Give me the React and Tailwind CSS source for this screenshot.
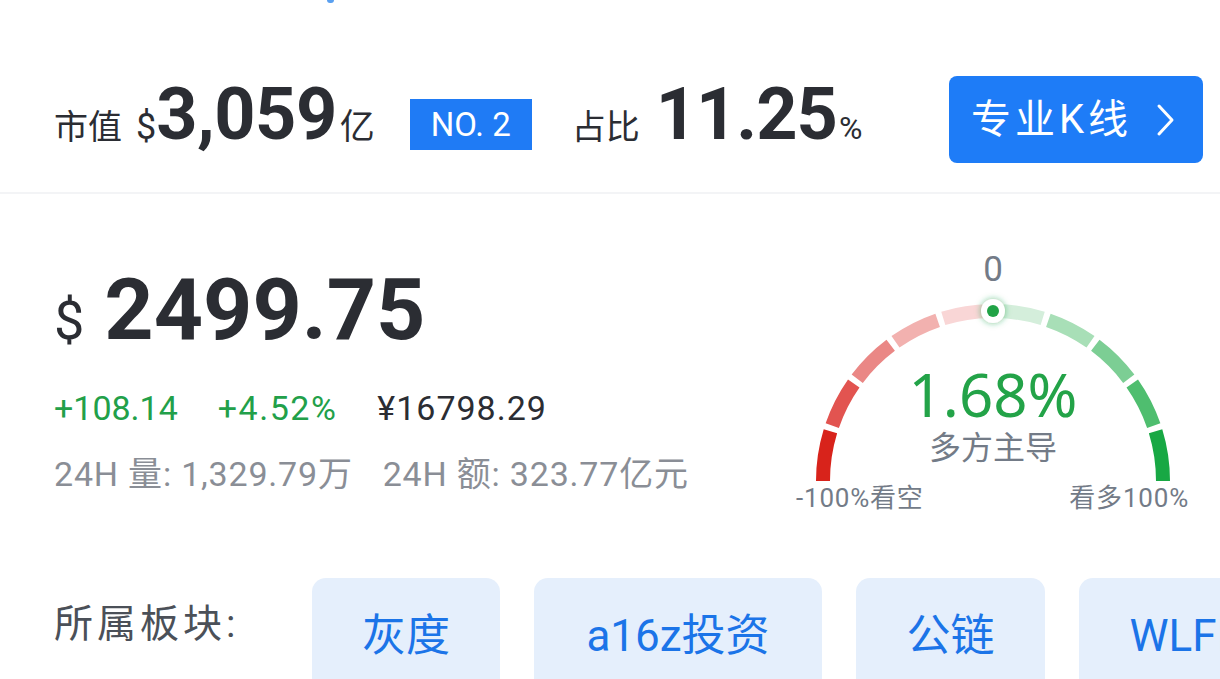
const segs = [
    "#d8231b",
    "#e25450",
    "#ea8785",
    "#f2b1af",
    "#f9d6d6",
    "#d4eedb",
    "#a8dfb7",
    "#7cce94",
    "#4fbe6f",
    "#18a844",
];

function arcPath(cx, cy, r, a0, a1) {
    const rad = (a) => (a * Math.PI) / 180;
    const x0 = cx + r * Math.cos(rad(a0));
    const y0 = cy - r * Math.sin(rad(a0));
    const x1 = cx + r * Math.cos(rad(a1));
    const y1 = cy - r * Math.sin(rad(a1));
    return `M ${x0} ${y0} A ${r} ${r} 0 0 1 ${x1} ${y1}`;
}

function Gauge() {
    const cx = 210;
    const cy = 235;
    const r = 170;
    return (
        <div className="relative w-[420px] h-[270px] shrink-0">
            <svg width="420" height="270" className="absolute left-0 top-0">
                <defs>
                    <filter id="glow" x="-80%" y="-80%" width="260%" height="260%">
                        <feDropShadow dx="0" dy="0" stdDeviation="3" floodColor="#22a04b" floodOpacity="0.6" />
                    </filter>
                </defs>
                {segs.map((c, i) => {
                    const start = 180 - 18 * i - (i === 0 ? 0 : 1);
                    const end = 180 - 18 * (i + 1) + (i === 9 ? 0 : 1);
                    return (
                        <path
                            key={i}
                            d={arcPath(cx, cy, r, start, end)}
                            stroke={c}
                            strokeWidth="14"
                            fill="none"
                        />
                    );
                })}
                <circle cx={cx} cy={cy - r} r="12" fill="#fff" filter="url(#glow)" />
                <circle cx={cx} cy={cy - r} r="6" fill="#21a346" />
            </svg>
            <div className="absolute left-0 right-0 top-[6px] text-center text-[35px] leading-none text-[#737b87]">
                0
            </div>
            <div className="absolute left-0 right-0 top-[118px] text-center text-[60px] leading-none text-[#23a348] font-['Noto_Sans',sans-serif]">
                1.68%
            </div>
            <div className="absolute left-0 right-0 top-[186px] text-center text-[32px] leading-none text-[#737b87]">
                多方主导
            </div>
            <div className="absolute left-[13px] top-[239px] text-[26px] leading-none text-[#737b87] tracking-[0.8px]">
                -100%看空
            </div>
            <div className="absolute right-[14px] top-[239px] text-[26px] leading-none text-[#737b87] tracking-[0.8px]">
                看多100%
            </div>
        </div>
    );
}

const tags = [
    { name: "灰度", w: "w-[188px]" },
    { name: "a16z投资", w: "w-[288px]" },
    { name: "公链", w: "w-[189px]" },
    { name: "WLFI", w: "w-[200px]" },
];

export default function App() {
    return (
        <div className="w-[1220px] h-[679px] overflow-hidden bg-white text-[#2b2d33] font-['Roboto','Noto_Sans_CJK_SC',sans-serif]">
            <div className="h-[3px] w-[7px] ml-[327px] rounded-b-full bg-[#5aa0f0]"></div>

            <div className="flex items-center justify-between pl-[54px] pr-[17px] pt-[73px] pb-[29px] border-b-2 border-[#f3f4f6]">
                <div className="flex items-baseline relative -top-[4px]">
                    <span className="text-[34px] leading-none">市值</span>
                    <span className="ml-[14px] text-[36px] leading-none">$</span>
                    <span className="text-[72px] font-bold leading-none tracking-[-0.5px]">3,059</span>
                    <span className="ml-[3px] text-[35px] leading-none">亿</span>
                    <span className="ml-[35px] bg-[#1f7bf5] text-white text-[33px] leading-none px-[21px] pt-[9px] pb-[9px] relative -top-[3px]">
                        NO. 2
                    </span>
                    <span className="ml-[40px] text-[34px] leading-none">占比</span>
                    <span className="ml-[16px] text-[72px] font-bold leading-none tracking-[-1px]">11.25</span>
                    <span className="ml-[2px] text-[32px] leading-none">%</span>
                </div>
                <button className="flex items-center justify-between w-[254px] h-[87px] pl-[22px] pr-[26px] rounded-[8px] bg-[#1e7cf7] text-white text-[40px] leading-none">
                    <span className="tracking-[4px]">专业K线</span>
                    <svg width="22" height="36" viewBox="0 0 22 36" fill="none">
                        <path d="M4 4 L17 18 L4 32" stroke="white" strokeWidth="3" strokeLinecap="round" strokeLinejoin="round" />
                    </svg>
                </button>
            </div>

            <div className="flex justify-between pl-[54px] pr-[17px] h-[384px]">
                <div className="pt-[73px]">
                    <div className="flex items-baseline">
                        <span className="text-[54px] leading-none">$</span>
                        <span className="ml-[20px] text-[86px] font-bold leading-none">2499.75</span>
                    </div>
                    <div className="flex items-baseline mt-[38px] text-[34px] leading-none tracking-[0.5px]">
                        <span className="text-[#22a049] tracking-[0px]">+108.14</span>
                        <span className="ml-[40px] text-[#22a049] tracking-[1.5px]">+4.52%</span>
                        <span className="ml-[40px] text-[#2b2d33] tracking-[1px]">¥16798.29</span>
                    </div>
                    <div className="flex items-baseline mt-[32px] text-[34px] leading-none text-[#8a8e96] tracking-[0.8px]">
                        <span>24H 量: 1,329.79万</span>
                        <span className="ml-[30px]">24H 额: 323.77亿元</span>
                    </div>
                </div>
                <div className="pt-[52px]">
                    <Gauge />
                </div>
            </div>

            <div className="flex items-start pl-[54px]">
                <div className="w-[258px] shrink-0 pt-[27px] text-[39px] leading-none text-[#4b5058] tracking-[4px]">
                    所属板块:
                </div>
                <div className="flex gap-[34px]">
                    {tags.map((t) => (
                        <div
                            key={t.name}
                            className={`${t.w} shrink-0 h-[120px] rounded-t-[14px] bg-[#e5effc] flex justify-center pt-[36px] text-[44px] leading-none text-[#1b74e8]`}
                        >
                            {t.name}
                        </div>
                    ))}
                </div>
            </div>
        </div>
    );
}
